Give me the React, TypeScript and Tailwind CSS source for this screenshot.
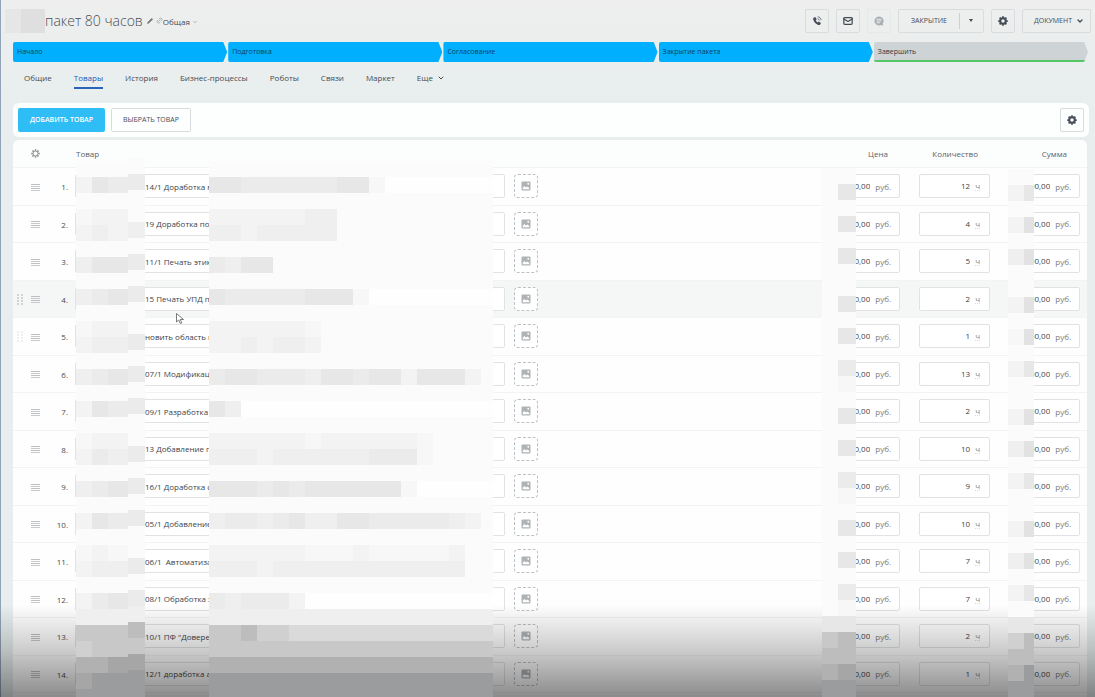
import clsx from "clsx";
import { ChevronDown, Link2, Mail, Pencil } from "lucide-react";

const stages = ["Начало", "Подготовка", "Согласование", "Закрытие пакета"];

const tabs = ["Общие", "Товары", "История", "Бизнес-процессы", "Роботы", "Связи", "Маркет"];

const products = [
  { name: "14/1 Доработка м", qty: 12 },
  { name: "19 Доработка по", qty: 4 },
  { name: "11/1 Печать этик", qty: 5 },
  { name: "15 Печать УПД п", qty: 2 },
  { name: "новить область п", qty: 1 },
  { name: "07/1 Модификац", qty: 13 },
  { name: "09/1 Разработка", qty: 2 },
  { name: "13 Добавление п", qty: 10 },
  { name: "16/1 Доработка с", qty: 9 },
  { name: "05/1 Добавление", qty: 10 },
  { name: "06/1  Автоматиза", qty: 7 },
  { name: "08/1 Обработка з", qty: 7 },
  { name: '10/1 ПФ "Довере', qty: 2 },
  { name: "12/1 доработка а", qty: 1 },
];

// One letter per mosaic tile, from light to dark
const shades: Record<string, string> = {
  w: "bg-[#fefefe]",
  ".": "bg-[#fbfbfb]",
  a: "bg-[#f7f7f7]",
  b: "bg-[#f3f3f3]",
  c: "bg-[#efefef]",
  d: "bg-[#ebebeb]",
  e: "bg-[#e7e7e7]",
  f: "bg-[#e2e2e2]",
  g: "bg-[#dadada]",
  h: "bg-[#d0d0d0]",
  i: "bg-[#c8c8c8]",
  j: "bg-[#bdbdbd]",
  k: "bg-[#b1b1b1]",
  l: "bg-[#a6a6a6]",
  m: "bg-[#9b9c9d]",
};

const nameTiles = [
  "..................",
  "eeddddddeeawwwwwww",
  "..................",
  "bbbbbbcc..........",
  "ccbccccc..........",
  "..................",
  "dcee..............",
  "..................",
  "edddddeeeawwwwwwww",
  "..................",
  "bbbbbba...........",
  "bbcbccb...........",
  "..................",
  "deedddceedeebeeeb.",
  "..................",
  "ecwwwwwwwwwwwwwwww",
  "..................",
  "bbbbbbabbbbbba....",
  "cccbccccccddda....",
  "..................",
  "eeededeeeeeeawwwww",
  "..................",
  "cddcdecceedddddcb.",
  "..................",
  "bbbbbbaaabaaaaab..",
  "cccbcccccccccccc..",
  "..................",
  "dcdddbwwwwwwwwwwww",
  "cccccccccccccccccc",
  "iijhhggggggggggggg",
  "iiiiiiiiiiiiiiiiii",
  "kkkkkkkkkkkkkkkkkk",
  "mmmmmmmmmmmmmmmmmm",
  "mmmmmmmmmmmmmmmmmm",
];

const prefixTiles = [
  "...", "bed", "...", "abb", "bcb", "...", "cee", "...", "cde", "...", "abb", "bcc",
  "...", "cde", "...", "bed", "...", "abb", "bdc", "...", "cde", "...", "bed", "...",
  "aba", "bcc", "...", "bde", "ccc", "iii", "hii", "kkl", "lmm", "mmm",
];

const numberTiles = [
  ".", "d", ".", ".", "c", ".", "d", ".", "d", ".", ".", "d", ".", "d", ".", "d", ".",
  ".", "d", ".", "d", ".", "d", ".", ".", "d", ".", "d", "c", "j", "i", "l", "m", "m",
];

const priceTiles = [
  "..", ".e", "..", ".e", "..", ".e", "..", "..", ".e", "..", ".e", "..", ".d", ".a",
  "..", ".e", "..", ".e", "..", ".d", ".a", "..", ".e", "..", ".e", "..", ".d", ".a",
  "ee", "ij", "jj", "kl", "mm", "mm",
];

const sumTiles = [
  "..", "be", "..", "bf", "..", "cf", "..", "..", "bf", "..", "af", "..", "be", "..",
  "..", "bf", "..", "cf", "..", "be", "..", "..", "bf", "..", "cf", "..", "be", "..",
  "ee", "hj", "jj", "km", "mm", "mm",
];

function Mosaic({ rows, className }: { rows: string[]; className: string }) {
  return (
    <div aria-hidden className={clsx("absolute bottom-0 z-20 overflow-hidden", className)}>
      {rows.map((row, i) => (
        <div key={i} className="flex h-4">
          {row.split("").map((tile, j) => (
            <span key={j} className={clsx("h-4 w-4 shrink-0 last:flex-1", shades[tile])} />
          ))}
        </div>
      ))}
    </div>
  );
}

function IconButton({
  label,
  muted,
  children,
}: {
  label: string;
  muted?: boolean;
  children: React.ReactNode;
}) {
  return (
    <button
      type="button"
      aria-label={label}
      className={clsx(
        "flex h-6 w-6 items-center justify-center rounded-xs border",
        muted ? "border-[#e5e8e9] text-[#a9aeb3]" : "border-[#d8dcde] text-[#454d57]",
      )}
    >
      {children}
    </button>
  );
}

function GearIcon({ size, thickness }: { size: number; thickness: number }) {
  return (
    <svg width={size} height={size} viewBox="0 0 20 20" fill="none" stroke="currentColor">
      <circle cx="10" cy="10" r="5.500" strokeWidth={thickness} />
      {[0, 45, 90, 135, 180, 225, 270, 315].map((angle) => (
        <path key={angle} d="M10 .5v3.500" strokeWidth="3.500" transform={`rotate(${angle} 10 10)`} />
      ))}
    </svg>
  );
}

function PhoneIcon() {
  return (
    <svg width="10" height="10" viewBox="0 0 20 20" fill="none">
      <path
        d="M3 3.500 6.500 2l3 4.500-2 2.200c.7 1.800 2 3.200 3.900 4.100l2.200-1.900 4.200 3.200-1.700 3.400c-1 .8-3.300.7-5.600-.5C6.500 14.900 3.600 11.200 2.600 7.500 2.200 5.700 2.300 4.300 3 3.500Z"
        fill="currentColor"
      />
      <path d="M11 5.500c2 .3 3.300 1.600 3.500 3.600M11.500 1.500c3.800.4 6.400 3 6.800 6.800" stroke="currentColor" strokeWidth="1.500" />
    </svg>
  );
}

function ChatIcon() {
  return (
    <svg width="10" height="10" viewBox="0 0 20 20">
      <path d="M10 1a9 9 0 1 0 4 17l4.500 1-1-4A9 9 0 0 0 10 1Z" fill="currentColor" />
      <path d="M5 6.500h10M5 10h10M5 13.500h7" stroke="#edf0f1" strokeWidth="1.800" />
    </svg>
  );
}

function PictureIcon() {
  return (
    <svg width="10" height="10" viewBox="0 0 20 20">
      <rect x="1" y="1" width="18" height="18" rx="2" fill="#aeb3b6" />
      <circle cx="14.500" cy="5.500" r="1.800" fill="#fff" />
      <path d="M3.500 16.500v-3l3.500-3.500 3 3 3-2 3.500 3v2.500Z" fill="#fff" />
    </svg>
  );
}

function MenuLines() {
  return (
    <span className="flex flex-col gap-px">
      <i className="h-px w-[9px] bg-[#bcc0c3]" />
      <i className="h-px w-[9px] bg-[#c6cacc]" />
      <i className="h-px w-[9px] bg-[#bcc0c3]" />
      <i className="h-px w-[9px] bg-[#c6cacc]" />
    </span>
  );
}

function DragDots() {
  return (
    <svg width="6" height="12" viewBox="0 0 6 12" fill="#d0d4d6">
      {[0, 3, 6, 9].map((y) => (
        <g key={y}>
          <rect x="0" y={y} width="2" height="2" />
          <rect x="4" y={y} width="2" height="2" />
        </g>
      ))}
    </svg>
  );
}

function MoneyField({ label, className }: { label: string; className: string }) {
  return (
    <div
      className={clsx(
        "ml-auto flex h-6 items-center gap-[5px] rounded-xs border border-[#e0e3e4] bg-white pr-2",
        className,
      )}
    >
      <input
        aria-label={label}
        defaultValue="00,00"
        className="w-full min-w-0 flex-1 bg-transparent text-right text-[#3e4349] outline-none"
      />
      <span className="pt-px text-[#757b80]">руб.</span>
    </div>
  );
}

export default function App() {
  return (
    <div className="flex min-h-screen flex-col border-l border-[#93a3b8] bg-linear-to-b from-[#eeeeee] to-[#e8eeee] to-[104px] font-['Open_Sans','Noto_Sans',sans-serif] text-[8px] leading-3 text-[#464c52]">
      <header className="flex h-[42px] items-center justify-between pr-1 pb-px pl-1">
        <div className="flex items-center">
          <div aria-hidden className="flex h-6 w-10">
            <span className="w-4 bg-[#e6e6e6]" />
            <span className="flex-1 bg-[#dfdfdf]" />
          </div>
          <h1 className="text-[14px] leading-5 font-light text-[#4a4f54]">пакет 80 часов</h1>
          <Pencil size={6} className="ml-1 fill-current text-[#70767b]" />
          <Link2 size={7} className="ml-[3px] -rotate-45 text-[#8b9196]" />
          <button type="button" className="flex items-center gap-[2px] pt-[2px]">
            Общая
            <ChevronDown size={6} className="text-[#80868b]" />
          </button>
        </div>

        <div className="flex gap-[7px] text-[7px]">
          <IconButton label="Позвонить">
            <PhoneIcon />
          </IconButton>
          <IconButton label="Написать">
            <Mail size={10} strokeWidth={3} />
          </IconButton>
          <IconButton label="Чат" muted>
            <ChatIcon />
          </IconButton>
          <div className="flex h-6 items-center rounded-xs border border-[#d8dcde] text-[#454d57]">
            <button type="button" className="w-[60px] text-center uppercase">
              Закрытие
            </button>
            <button
              type="button"
              aria-label="Другие действия"
              className="flex h-4 w-6 items-center justify-center border-l border-[#cbd0d3]"
            >
              <svg width="4" height="3" viewBox="0 0 4 3">
                <path d="M0 0h4L2 3Z" fill="currentColor" />
              </svg>
            </button>
          </div>
          <IconButton label="Настройки">
            <GearIcon size={10} thickness={4} />
          </IconButton>
          <button
            type="button"
            className="flex h-6 items-center gap-1 rounded-xs border border-[#d8dcde] pr-[6px] pl-[11px] text-[#454d57] uppercase"
          >
            Документ
            <ChevronDown size={8} strokeWidth={4} />
          </button>
        </div>
      </header>

      {/* Deal stages */}
      <div className="flex gap-px pr-[7px] pl-3">
        {stages.map((stage) => (
          <button
            key={stage}
            type="button"
            className="h-5 flex-1 rounded-l-xs bg-[#00b0ff] pl-1 text-left text-[7px] text-[#0c3d5e] [clip-path:polygon(0_0,calc(100%-4px)_0,100%_50%,calc(100%-4px)_100%,0_100%)]"
          >
            {stage}
          </button>
        ))}
        <button
          type="button"
          className="h-5 flex-1 rounded-l-xs border-b-2 border-[#55c766] bg-[#ced3d5] pt-[2px] pl-1 text-left text-[7px] text-[#33393f] [clip-path:polygon(0_0,calc(100%-4px)_0,100%_50%,calc(100%-4px)_100%,0_100%)]"
        >
          Завершить
        </button>
      </div>

      <nav className="flex h-[41px] items-start gap-[22px] pt-2 pl-[23px]">
        {tabs.map((tab) => (
          <a
            key={tab}
            href="#"
            className={clsx(
              "h-[19px] border-b-2 pt-[2px]",
              tab === "Товары" ? "border-[#2a63b8] font-medium text-[#1f57ae]" : "border-transparent",
            )}
          >
            {tab}
          </a>
        ))}
        <button type="button" className="flex items-center gap-1 pt-[2px]">
          Еще
          <ChevronDown size={8} strokeWidth={3} />
        </button>
      </nav>

      <div className="mr-[6px] ml-3 flex h-[34px] items-center gap-[6px] rounded-md bg-[#fdfefe] px-[5px]">
        <button
          type="button"
          className="h-6 w-[87px] rounded-xs bg-[#2fbdf5] text-[7px] font-semibold text-white uppercase"
        >
          Добавить товар
        </button>
        <button
          type="button"
          className="h-6 w-20 rounded-xs border border-[#d8dcde] text-[7px] text-[#454d57] uppercase"
        >
          Выбрать товар
        </button>
        <div className="ml-auto">
          <IconButton label="Настройки списка">
            <GearIcon size={10} thickness={4} />
          </IconButton>
        </div>
      </div>

      <main className="relative mt-[3px] mr-2 ml-3 flex-1 overflow-hidden rounded-t-md bg-[#fefefe]">
        <table className="w-full table-fixed border-collapse">
          <colgroup>
            <col className="w-[37px]" />
            <col className="w-[25px]" />
            <col />
            <col className="w-[97px]" />
            <col className="w-[90px]" />
            <col className="w-[88px]" />
          </colgroup>
          <thead>
            <tr className="h-[27px] border-b border-[#f2f4f4] bg-[#fcfdfd] text-[#5c6268]">
              <th className="p-0">
                <button type="button" aria-label="Настроить столбцы" className="block pl-[18px] text-[#858b90]">
                  <GearIcon size={9} thickness={2} />
                </button>
              </th>
              <th />
              <th className="p-0 pt-px pl-px text-left font-normal">Товар</th>
              <th className="pt-px pr-[21px] text-right font-normal">Цена</th>
              <th className="pt-px pr-[21px] text-right font-normal">Количество</th>
              <th className="pt-px pr-5 text-right font-normal">Сумма</th>
            </tr>
          </thead>
          <tbody>
            {products.map((product, i) => (
              <tr
                key={product.name}
                className={clsx(
                  "border-b border-[#f2f4f4] odd:h-[38px] even:h-[37px]",
                  i === 3 && "bg-[#f5f7f7]",
                )}
              >
                <td className="p-0">
                  <div className="flex items-center gap-2 pt-[2px] pl-1">
                    <span className={clsx("w-[6px]", i === 4 && "opacity-30", i !== 3 && i !== 4 && "opacity-0")}>
                      <DragDots />
                    </span>
                    <MenuLines />
                  </div>
                </td>
                <td className="p-0 pt-[2px] pr-[7px] text-right">{i + 1}.</td>
                <td className="p-0">
                  <div className="flex items-center gap-[9px]">
                    <input
                      aria-label={`Товар ${i + 1}`}
                      defaultValue={product.name}
                      className="h-6 w-[430px] rounded-xs border border-[#e0e3e4] bg-white pl-[69px] text-[#3e4349] outline-none"
                    />
                    <button
                      type="button"
                      aria-label={`Изображение товара ${i + 1}`}
                      className="flex h-6 w-6 items-center justify-center rounded-sm border border-dashed border-[#bbc0c3] bg-white"
                    >
                      <PictureIcon />
                    </button>
                  </div>
                </td>
                <td className="p-0 pr-[9px]">
                  <MoneyField label={`Цена ${i + 1}`} className="w-[78px]" />
                </td>
                <td className="p-0 pr-[9px]">
                  <div className="ml-auto flex h-6 w-[71px] items-center gap-[5px] rounded-xs border border-[#e0e3e4] bg-white pr-[9px]">
                    <input
                      aria-label={`Количество ${i + 1}`}
                      defaultValue={product.qty}
                      className="w-full min-w-0 flex-1 bg-transparent text-right text-[#3e4349] outline-none"
                    />
                    <span className="border-b border-dotted border-[#d6dadc] leading-[9px] text-[#80868b]">ч</span>
                  </div>
                </td>
                <td className="p-0 pr-[7px]">
                  <MoneyField label={`Сумма ${i + 1}`} className="w-[71px]" />
                </td>
              </tr>
            ))}
          </tbody>
        </table>

        {/* Hidden customer data */}
        <Mosaic rows={prefixTiles} className="top-[21px] left-[63px] w-[52px]" />
        <Mosaic rows={numberTiles} className="top-[18px] left-[115px] w-[17px]" />
        <Mosaic rows={nameTiles} className="top-[21px] left-[196px] w-[284px]" />
        <Mosaic rows={priceTiles} className="top-[28px] right-[231px] w-[34px]" />
        <Mosaic rows={sumTiles} className="top-[29px] right-[53px] w-[26px]" />

        {/* Pointer */}
        <svg className="absolute top-[173px] left-[163px] z-20" width="8" height="11" viewBox="0 0 16 22">
          <path
            d="M1 1v17l4.500-4 3 7 3-1.300-3-6.700H15Z"
            fill="#fff"
            stroke="#55595d"
            strokeWidth="1.600"
          />
        </svg>
      </main>

      {/* Player shade at the bottom of the window */}
      <div className="pointer-events-none fixed inset-x-0 bottom-0 z-10 h-[92px] bg-linear-to-b from-black/0 via-black/20 to-black/45" />
    </div>
  );
}
